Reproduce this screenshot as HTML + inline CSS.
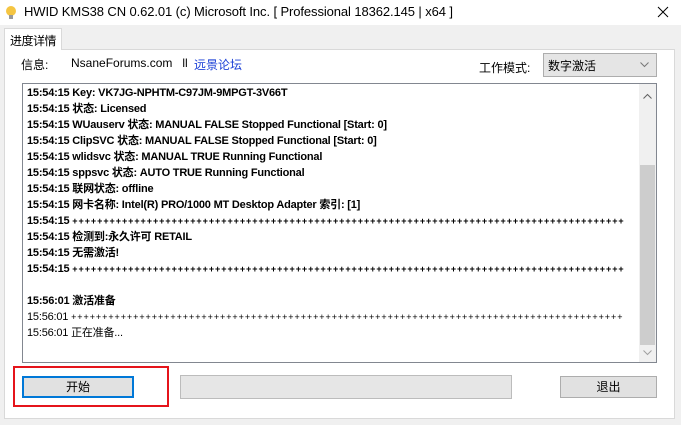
<!DOCTYPE html>
<html><head><meta charset="utf-8"><style>
*{margin:0;padding:0;box-sizing:border-box}
body{width:681px;height:425px;background:#f0f0f0;font-family:"Liberation Sans","Noto Sans CJK SC",sans-serif;position:relative;overflow:hidden;font-size:12px;color:#000}
.abs{position:absolute}
.title{left:0;top:0;width:681px;height:25px;background:#fff}
.log div{height:16px;line-height:16px;white-space:nowrap}
.b{font-weight:bold}
.p{display:inline-block;width:552px;overflow:hidden;vertical-align:top;font-size:9px;letter-spacing:0.95px}
</style></head><body>
<div class="abs title">
 <svg class="abs" style="left:5px;top:5px" width="12" height="16" viewBox="0 0 12 16"><circle cx="6" cy="6" r="5" fill="#f5c542"/><rect x="4" y="10" width="4" height="4" fill="#999"/></svg>
 <div class="abs" style="left:24px;top:4px;font-size:13px;letter-spacing:-0.1px">HWID KMS38 CN 0.62.01 (c) Microsoft Inc. [ Professional 18362.145 | x64 ]</div>
 <svg class="abs" style="left:657px;top:6px" width="12" height="12" viewBox="0 0 12 12"><path d="M1 1L11 11M11 1L1 11" stroke="#000" stroke-width="1"/></svg>
</div>
<div class="abs" style="left:4px;top:49px;width:671px;height:370px;background:#fff;border:1px solid #d9d9d9"></div>
<div class="abs" style="left:4px;top:28px;width:58px;height:22px;background:#fff;border:1px solid #d9d9d9;border-bottom:none;font-size:12px;padding:3px 0 0 5px;white-space:nowrap;letter-spacing:-0.5px">进度详情</div>
<div class="abs" style="left:21px;top:56px">信息:</div>
<div class="abs" style="left:71px;top:56px">NsaneForums.com &nbsp;&nbsp;ll</div>
<div class="abs" style="left:194px;top:56px;color:#1a3fd6">远景论坛</div>
<div class="abs" style="left:479px;top:59px">工作模式:</div>
<div class="abs" style="left:543px;top:53px;width:114px;height:24px;background:#e5e5e5;border:1px solid #adadad;padding:3px 0 0 4px">数字激活<svg class="abs" style="right:7px;top:8px" width="9" height="6" viewBox="0 0 9 6"><path d="M0.5 0.5L4.5 4.5L8.5 0.5" stroke="#777" fill="none"/></svg></div>
<div class="abs" style="left:22px;top:83px;width:635px;height:280px;border:1px solid #828790;background:#fff"></div>
<div class="abs" style="left:639px;top:84px;width:17px;height:278px;background:#f0f0f0"></div>
<div class="abs" style="left:640px;top:165px;width:15px;height:180px;background:#cdcdcd"></div>
<svg class="abs" style="left:643px;top:93px" width="9" height="6" viewBox="0 0 9 6"><path d="M0.5 5.5L4.5 1.5L8.5 5.5" stroke="#606060" fill="none"/></svg>
<svg class="abs" style="left:643px;top:350px" width="9" height="6" viewBox="0 0 9 6"><path d="M0.5 0.5L4.5 4.5L8.5 0.5" stroke="#a0a0a0" fill="none"/></svg>
<div class="abs log" style="left:27px;top:85px;font-size:11px;letter-spacing:-0.2px">
<div class="b">15:54:15 Key: VK7JG-NPHTM-C97JM-9MPGT-3V66T</div>
<div class="b">15:54:15 状态: Licensed</div>
<div class="b">15:54:15 WUauserv 状态: MANUAL FALSE Stopped Functional [Start: 0]</div>
<div class="b">15:54:15 ClipSVC 状态: MANUAL FALSE Stopped Functional [Start: 0]</div>
<div class="b">15:54:15 wlidsvc 状态: MANUAL TRUE Running Functional</div>
<div class="b">15:54:15 sppsvc 状态: AUTO TRUE Running Functional</div>
<div class="b">15:54:15 联网状态: offline</div>
<div class="b">15:54:15 网卡名称: Intel(R) PRO/1000 MT Desktop Adapter 索引: [1]</div>
<div class="b">15:54:15 <span class="p">+++++++++++++++++++++++++++++++++++++++++++++++++++++++++++++++++++++++++++++++++++++++++</span></div>
<div class="b">15:54:15 检测到:永久许可 RETAIL</div>
<div class="b">15:54:15 无需激活!</div>
<div class="b">15:54:15 <span class="p">+++++++++++++++++++++++++++++++++++++++++++++++++++++++++++++++++++++++++++++++++++++++++</span></div>
<div>&nbsp;</div>
<div class="b">15:56:01 激活准备</div>
<div>15:56:01 <span class="p">+++++++++++++++++++++++++++++++++++++++++++++++++++++++++++++++++++++++++++++++++++++++++</span></div>
<div>15:56:01 正在准备...</div>
</div>
<div class="abs" style="left:22px;top:376px;width:112px;height:22px;background:#e1e1e1;border:1px solid #0078d7;box-shadow:inset 0 0 0 1px #0078d7;text-align:center;line-height:20px">开始</div>
<div class="abs" style="left:180px;top:375px;width:332px;height:24px;background:#e6e6e6;border:1px solid #bcbcbc"></div>
<div class="abs" style="left:560px;top:376px;width:97px;height:22px;background:#e1e1e1;border:1px solid #adadad;text-align:center;line-height:20px">退出</div>
<div class="abs" style="left:13px;top:366px;width:156px;height:41px;border:2px solid #e5141b"></div>
</body></html>
